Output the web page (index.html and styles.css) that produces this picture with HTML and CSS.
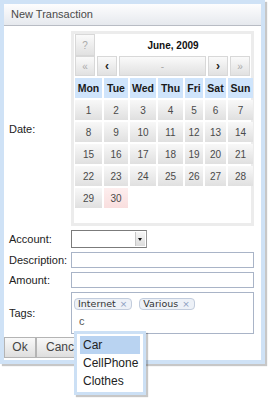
FILE: index.html
```html
<!DOCTYPE html>
<html>
<head>
<meta charset="utf-8">
<link rel="stylesheet" href="styles.css">
</head>
<body>
<div class="dialog">
  <div class="header">New Transaction</div>
  <div class="body">
    <div class="form">
      <div class="lbl">Date:</div>
      <div class="cal">
        <div class="cal-top"><span class="cbtn dim">?</span><span class="title">June, 2009</span></div>
        <div class="cal-nav">
          <span class="cbtn dim">«</span>
          <span class="cbtn dark">‹</span>
          <span class="cbtn dim">-</span>
          <span class="cbtn dark">›</span>
          <span class="cbtn dim">»</span>
        </div>
        <div class="days">
          <span class="dh">Mon</span><span class="dh">Tue</span><span class="dh">Wed</span><span class="dh">Thu</span><span class="dh">Fri</span><span class="dh">Sat</span><span class="dh">Sun</span>
          <span class="d">1</span><span class="d">2</span><span class="d">3</span><span class="d">4</span><span class="d">5</span><span class="d">6</span><span class="d">7</span>
          <span class="d">8</span><span class="d">9</span><span class="d">10</span><span class="d">11</span><span class="d">12</span><span class="d">13</span><span class="d">14</span>
          <span class="d">15</span><span class="d">16</span><span class="d">17</span><span class="d">18</span><span class="d">19</span><span class="d">20</span><span class="d">21</span>
          <span class="d">22</span><span class="d">23</span><span class="d">24</span><span class="d">25</span><span class="d">26</span><span class="d">27</span><span class="d">28</span>
          <span class="d">29</span><span class="d today">30</span>
        </div>
      </div>

      <div class="lbl">Account:</div>
      <div class="field"><div class="select"><span class="arrow"></span></div></div>

      <div class="lbl">Description:</div>
      <div class="field"><div class="input"></div></div>

      <div class="lbl">Amount:</div>
      <div class="field"><div class="input"></div></div>

      <div class="lbl">Tags:</div>
      <div class="field tagwrap">
        <div class="tags">
          <div class="chips">
            <span class="chip">Internet <span class="x">×</span></span>
            <span class="chip">Various <span class="x">×</span></span>
          </div>
          <div class="typed">c</div>
        </div>
        <div class="dropdown">
          <div class="opt sel">Car</div>
          <div class="opt">CellPhone</div>
          <div class="opt">Clothes</div>
        </div>
      </div>
    </div>
    <div class="buttons">
      <span class="btn ok">Ok</span><span class="btn">Cancel</span>
    </div>
  </div>
</div>
</body>
</html>
```

FILE: styles.css
```css
html, body {
  margin: 0;
  padding: 0;
  background: #fff;
}
body {
  min-height: 400px;
  font-family: "Liberation Sans", Arial, sans-serif;
  font-size: 11px;
  color: #222;
}
.dialog {
  position: relative;
  width: 257px;
  border: 4px solid #cfe2f6;
  box-shadow: 2px 2px 1px rgba(0,0,0,0.22);
  background: #fff;
}
.header {
  height: 21px;
  line-height: 21px;
  padding-left: 7px;
  color: #4a4a4a;
  background: linear-gradient(#fdfdfe, #e6e9ee);
  border-bottom: 1px solid #b8bcc4;
}
.body {
  padding: 5px 0 2px 0;
}
.form {
  display: grid;
  grid-template-columns: 67px 183px;
  row-gap: 4px;
  align-items: center;
}
.lbl {
  padding-left: 5px;
  color: #222;
}
.cal {
  box-sizing: border-box;
  height: 195px;
  border: 3px solid #ececec;
  padding: 0 1px 0 1px;
  background: #fff;
}
.cal-top {
  display: flex;
  height: 22px;
  gap: 1px;
}
.cbtn {
  box-sizing: border-box;
  width: 20px;
  display: flex;
  align-items: center;
  justify-content: center;
  background: linear-gradient(#fafafa, #e1e1e1);
  border: 1px solid #d8d8d8;
  color: #aaa;
  font-size: 10px;
}
.cbtn.dark {
  color: #222;
  font-weight: bold;
  font-size: 12px;
}
.title {
  flex: 1;
  display: flex;
  align-items: center;
  justify-content: center;
  font-weight: bold;
  font-size: 10px;
  color: #111;
}
.cal-nav {
  display: flex;
  gap: 2px;
  height: 20px;
}
.cal-nav .cbtn:nth-child(3) {
  flex: 1;
}
.days {
  display: grid;
  grid-template-columns: 27px 24px 26px 25px 18px 21px 25px;
  grid-auto-rows: 20px;
  gap: 2px;
  margin-top: 2px;
}
.dh {
  background: #cfe4fb;
  font-weight: bold;
  font-size: 10.5px;
  display: flex;
  align-items: center;
  justify-content: center;
  color: #1a1a1a;
}
.d {
  background: linear-gradient(#f8f8f8, #e0e0e0);
  font-size: 10px;
  color: #4a4a4a;
  display: flex;
  align-items: center;
  justify-content: center;
}
.d.today {
  background: linear-gradient(#fdeeee, #f9dede);
}
.field {
  display: flex;
}
.select {
  position: relative;
  box-sizing: border-box;
  width: 76px;
  height: 18px;
  border: 1px solid #7b7b7b;
  border-right-color: #999;
  background: #fff;
}
.arrow {
  position: absolute;
  right: 1px;
  top: 1px;
  width: 9px;
  height: 14px;
  background: linear-gradient(#f6f6f6, #dcdcdc);
  border-left: 1px solid #c8c8c8;
}
.arrow::after {
  content: "";
  position: absolute;
  left: 2px;
  top: 6px;
  border-left: 2.5px solid transparent;
  border-right: 2.5px solid transparent;
  border-top: 3px solid #111;
}
.input {
  box-sizing: border-box;
  width: 183px;
  height: 16px;
  border: 1px solid #a9b4c7;
  background: #fff;
}
.tagwrap {
  position: relative;
}
.tags {
  box-sizing: border-box;
  width: 183px;
  height: 42px;
  border: 1px solid #a9b4c7;
  padding: 5px 0 0 2px;
}
.chips {
  display: flex;
  gap: 7px;
}
.chip {
  box-sizing: border-box;
  height: 12px;
  line-height: 10px;
  padding: 0 4px 0 3px;
  border: 1px solid #c2ccdc;
  border-radius: 4px;
  background: #edf1f7;
  font-family: "DejaVu Sans", Verdana, sans-serif;
  font-size: 9.5px;
  color: #333;
}
.x {
  color: #8a9cc0;
  font-size: 9px;
  margin-left: 1px;
}
.typed {
  margin: 5px 0 0 5px;
  color: #555;
  font-size: 11px;
}
.dropdown {
  position: absolute;
  left: 3px;
  top: 39px;
  width: 60px;
  border: 3px solid #cce0f5;
  background: #fff;
  padding: 2px 3px;
  box-shadow: 2px 2px 1px rgba(0,0,0,0.22);
  z-index: 2;
}
.opt {
  height: 18px;
  line-height: 18px;
  padding-left: 3px;
  font-size: 12px;
  color: #222;
  white-space: nowrap;
}
.opt.sel {
  background: #b9d3f1;
}
.buttons {
  display: flex;
  margin-top: 3px;
}
.btn {
  box-sizing: border-box;
  height: 21px;
  line-height: 19px;
  padding: 0 9px;
  border: 1px solid #b4b4b4;
  background: linear-gradient(#f9f9f9, #dedede);
  color: #444;
  font-size: 12px;
}
.btn.ok {
  width: 32px;
  padding: 0;
  text-align: center;
}
```
